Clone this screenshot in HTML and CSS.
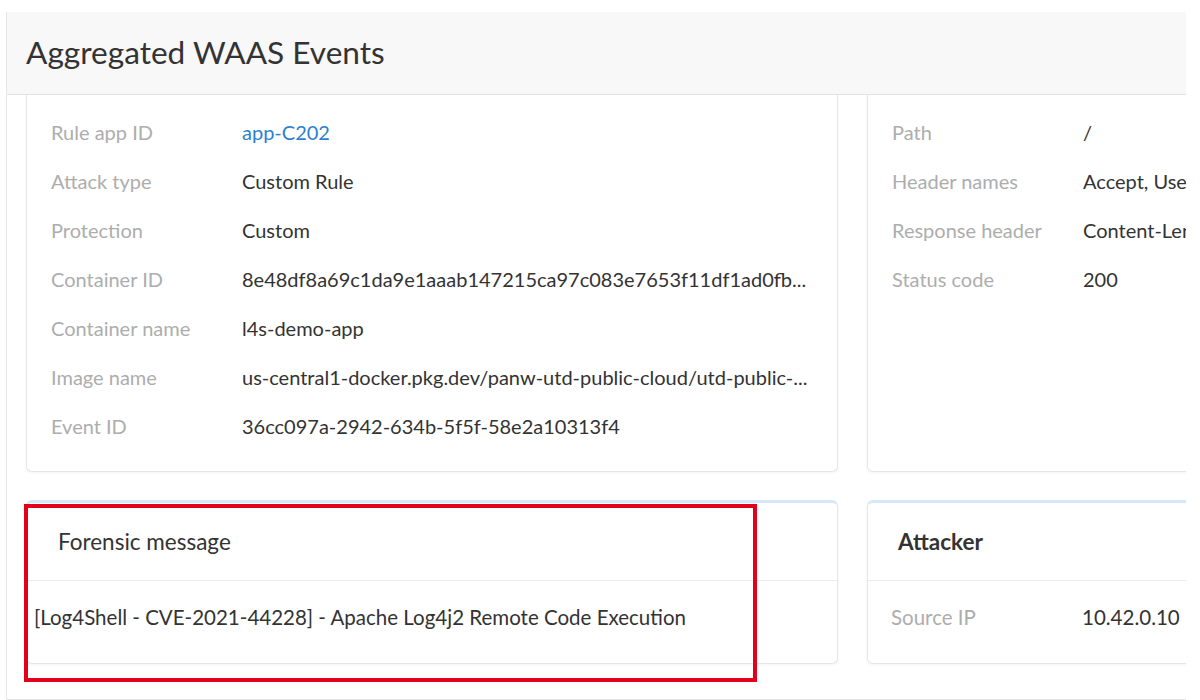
FILE: index.html
```html
<!DOCTYPE html>
<html lang="en">
<head>
<meta charset="utf-8">
<title>Aggregated WAAS Events</title>
<link rel="stylesheet" href="styles.css">
</head>
<body>
<div class="frame">
  <div class="header"><h1 class="title">Aggregated WAAS Events</h1></div>
  <div class="content">
    <div class="grid">
      <div class="card card-top">
        <div class="row"><span class="label">Rule app ID</span><span class="value link">app-C202</span></div>
        <div class="row"><span class="label">Attack type</span><span class="value">Custom Rule</span></div>
        <div class="row"><span class="label">Protection</span><span class="value">Custom</span></div>
        <div class="row"><span class="label">Container ID</span><span class="value">8e48df8a69c1da9e1aaab147215ca97c083e7653f11df1ad0fb...</span></div>
        <div class="row"><span class="label">Container name</span><span class="value">l4s-demo-app</span></div>
        <div class="row"><span class="label">Image name</span><span class="value">us-central1-docker.pkg.dev/panw-utd-public-cloud/utd-public-...</span></div>
        <div class="row"><span class="label">Event ID</span><span class="value">36cc097a-2942-634b-5f5f-58e2a10313f4</span></div>
      </div>
      <div class="card card-top card-right">
        <div class="row"><span class="label">Path</span><span class="value">/</span></div>
        <div class="row"><span class="label">Header names</span><span class="value">Accept, User-Agent</span></div>
        <div class="row"><span class="label">Response header</span><span class="value">Content-Length</span></div>
        <div class="row"><span class="label">Status code</span><span class="value">200</span></div>
      </div>
      <div class="card card-bottom forensic">
        <div class="card-head">Forensic message</div>
        <div class="card-body">[Log4Shell - CVE-2021-44228] - Apache Log4j2 Remote Code Execution</div>
        <div class="highlight"></div>
      </div>
      <div class="card card-bottom attacker">
        <div class="card-head strong">Attacker</div>
        <div class="card-body"><div class="row"><span class="label">Source IP</span><span class="value">10.42.0.10</span></div></div>
      </div>
    </div>
  </div>
</div>
</body>
</html>
```
FILE: styles.css
```css
* { box-sizing: border-box; }
html, body { margin: 0; padding: 0; background: #ffffff; }
body {
  font-family: Lato, "Open Sans", "Liberation Sans", sans-serif;
  color: #333333;
}
.frame {
  margin: 12px 0 0 6px;
  width: 1180px;
  height: 688px;
  border-left: 1px solid #e6e6e6;
  border-bottom: 1px solid #e6e6e6;
  overflow: hidden;
  display: flex;
  flex-direction: column;
}
.header {
  height: 83px;
  flex: none;
  background: #f8f8f8;
  border-bottom: 1px solid #e4e4e4;
  display: flex;
  align-items: center;
  padding-left: 19px;
}
.title {
  margin: 0 0 2px 0;
  font-size: 31.6px;
  font-weight: 400;
  color: #333333;
  letter-spacing: 0;
}
.content {
  flex: 1;
  padding-left: 19px;
}
.grid {
  display: grid;
  grid-template-columns: 812px 812px;
  column-gap: 29px;
  row-gap: 28px;
}
.card {
  background: #ffffff;
  border: 1px solid #e6e6e6;
  border-radius: 6px;
  box-shadow: 0 1px 3px rgba(0, 0, 0, 0.05);
  position: relative;
}
.card-top {
  border-top: none;
  border-top-left-radius: 0;
  border-top-right-radius: 0;
  padding: 12px 0 21px 24px;
}
.row {
  display: flex;
  align-items: center;
  height: 49px;
  font-size: 20px;
}
.label {
  width: 191px;
  flex: none;
  color: #adadad;
}
.value {
  color: #333333;
  white-space: nowrap;
}
.link { color: #2b7fd3; }
.card-bottom {
  border-top: 3px solid #d6e8f9;
  height: 164px;
  display: flex;
  flex-direction: column;
}
.card-head {
  height: 78px;
  flex: none;
  border-bottom: 1px solid #ebebeb;
  display: flex;
  align-items: center;
  padding-left: 31px;
  font-size: 22.5px;
  color: #333333;
}
.card-head.strong { font-weight: 700; padding-left: 30px; }
.card-body {
  flex: 1;
  display: flex;
  align-items: center;
  padding-bottom: 10px;
  font-size: 20.5px;
}
.forensic .card-body { padding-left: 7px; }
.attacker .card-body { padding-left: 23px; }
.attacker .card-body .row { height: auto; font-size: 20.5px; }
.highlight {
  position: absolute;
  left: -3px;
  top: 1px;
  width: 733px;
  height: 178px;
  border: 4px solid #e3001b;
  pointer-events: none;
}
```
